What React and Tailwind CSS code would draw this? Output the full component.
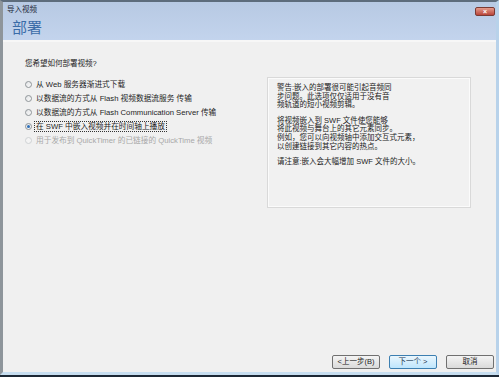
import React from 'react';

const font = { fontFamily: '"Liberation Sans", "Noto Sans CJK SC", sans-serif' };

const options = [
  { label: '从 Web 服务器渐进式下载' },
  { label: '以数据流的方式从 Flash 视频数据流服务 传输' },
  { label: '以数据流的方式从 Flash Communication Server 传输' },
  { label: '在 SWF 中嵌入视频并在时间轴上播放', checked: true, focus: true },
  { label: '用于发布到 QuickTimer 的已链接的 QuickTime 视频', disabled: true },
];

function Radio({ checked, disabled }) {
  return (
    <span
      className={`flex h-[7px] w-[7px] shrink-0 items-center justify-center rounded-full border ${
        disabled ? 'border-[#cfd2d4] bg-[#f4f4f4]' : 'border-[#8f9599] bg-gradient-to-br from-[#e2e4e6] to-[#fafafa]'
      }`}
    >
      {checked && <span className="h-[3px] w-[3px] rounded-full bg-[#2d6fb8]" />}
    </span>
  );
}

function Button({ children, primary }) {
  return (
    <div
      className={`flex h-[14px] w-[48px] items-center justify-center rounded-[2px] border text-[7.5px] leading-none ${
        primary
          ? 'border-[#3c7fb1] bg-gradient-to-b from-[#eaf6fd] to-[#bee6fd] text-[#1b3550]'
          : 'border-[#707070] bg-gradient-to-b from-[#f4f4f4] to-[#dadada] text-[#222]'
      }`}
    >
      {children}
    </div>
  );
}

export default function App() {
  return (
    <div className="flex h-[377px] w-[499px] flex-col bg-[#1c2835]" style={font}>
      <div className="flex flex-1 flex-col border-l-[3px] border-r-[3px] border-t-2 border-b-[3px] border-l-[#8e959b] border-r-[#b8d2ea] border-t-[#5d6c7c] border-b-[#c7def0]">
        {/* Header */}
        <div className="flex h-[38px] flex-col bg-gradient-to-b from-[#b7c9e3] to-[#c3d4ed]">
          <div className="flex h-[14px] items-center justify-between pl-[4px] pr-[1px]">
            <span className="mt-[1px] text-[7.5px] leading-none text-[#1d2a3a]">导入视频</span>
            <span className="mt-[4px] flex h-[9px] w-[20px] items-center justify-center rounded-[2px] border border-[#7a3a33] bg-gradient-to-b from-[#e49a8c] to-[#b9443a] text-[7px] font-bold leading-none text-white">
              ×
            </span>
          </div>
          <div className="pl-[9px] pt-[4px] text-[15px] leading-none text-[#3a6ca8]">部署</div>
        </div>

        {/* Content */}
        <div className="flex flex-1 flex-col border-t-2 border-t-[#f7f7f7] bg-[#f0f0f0]">
          <div className="pl-[22px] pt-[17px] text-[7.5px] leading-[10px] text-[#1e1e1e]">您希望如何部署视频?</div>

          <div className="mt-[8px] flex">
            <div className="flex w-[264px] flex-col pl-[22px]">
              {options.map((o) => (
                <div key={o.label} className="flex h-[14px] items-center gap-[2px]">
                  <Radio checked={o.checked} disabled={o.disabled} />
                  <span
                    className={`whitespace-nowrap px-[1px] text-[7.7px] leading-[9px] ${
                      o.disabled ? 'text-[#a8a8a8]' : 'text-[#1e1e1e]'
                    } ${o.focus ? 'border border-dotted border-[#333]' : 'border border-transparent'}`}
                  >
                    {o.label}
                  </span>
                </div>
              ))}
            </div>

            <div className="h-[131px] w-[204px] border border-[#d9d9d9] bg-[#f1f1f1] pl-[9px] pt-[6px] text-[7.5px] leading-[8.6px] text-[#222] shadow-[inset_0_0_0_1px_#fbfbfb]">
              <p>警告:嵌入的部署很可能引起音频同</p>
              <p>步问题。此选项仅仅适用于没有音</p>
              <p>频轨道的短小视频剪辑。</p>
              <p className="mt-[7px]">将视频嵌入到 SWF 文件使您能够</p>
              <p>将此视频与舞台上的其它元素同步。</p>
              <p>例如，您可以向视频轴中添加交互式元素，</p>
              <p>以创建链接到其它内容的热点。</p>
              <p className="mt-[7px]">请注意:嵌入会大幅增加 SWF 文件的大小。</p>
            </div>
          </div>

          <div className="mt-auto flex justify-end gap-[9px] pb-[3px] pr-[2px]">
            <Button>&lt;上一步(B)</Button>
            <Button primary>下一个 &gt;</Button>
            <Button>取消</Button>
          </div>
        </div>
      </div>
      <div className="h-[2px]" />
    </div>
  );
}
